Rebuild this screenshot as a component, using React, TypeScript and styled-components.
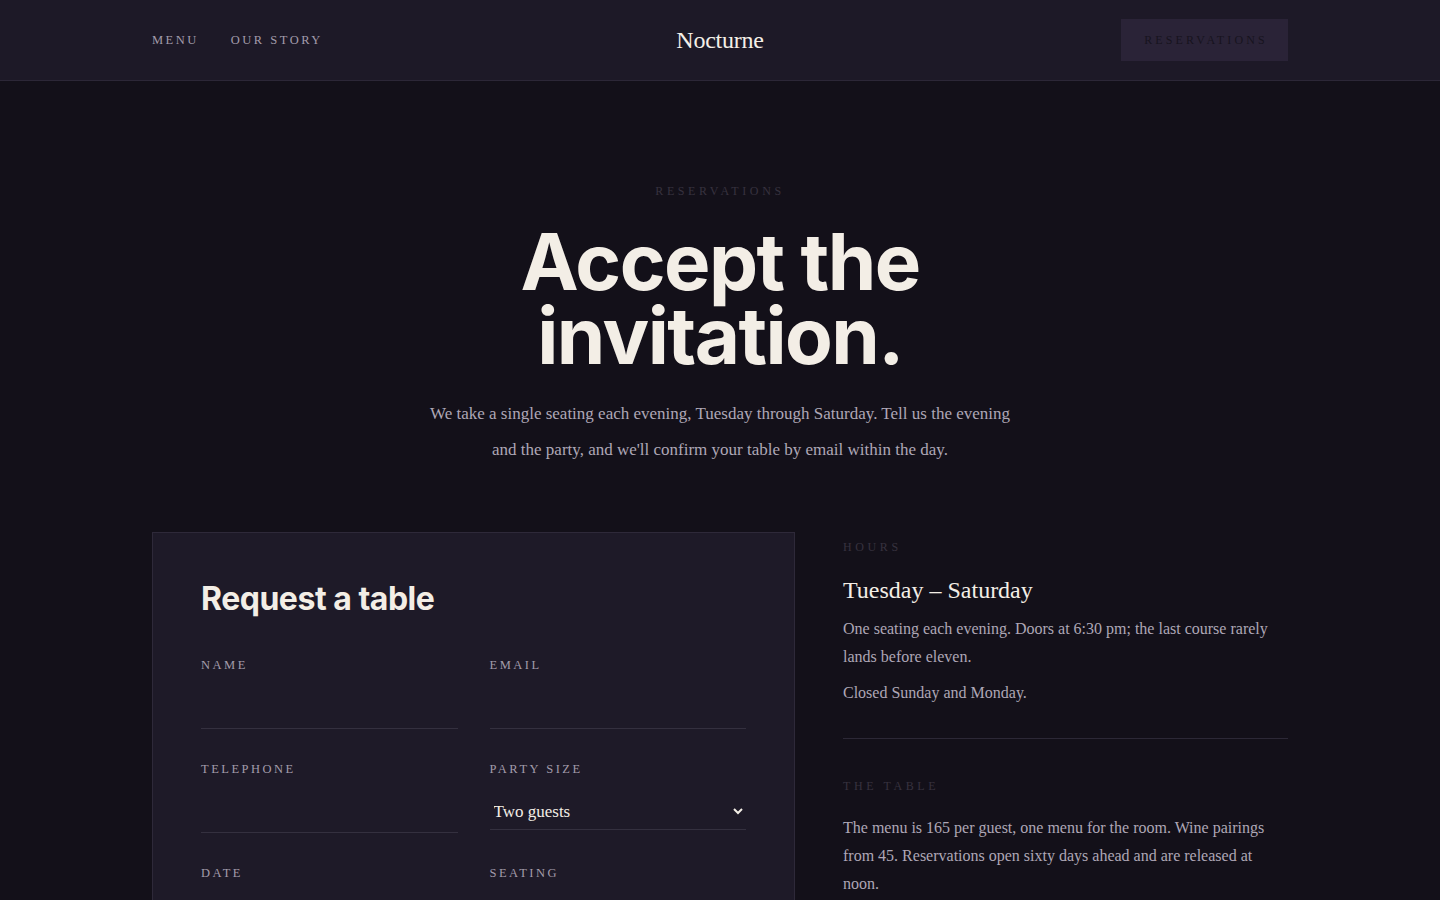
import React from 'react';
import styled, { createGlobalStyle } from 'styled-components';

const GlobalStyle = createGlobalStyle`
  html, body {
    margin: 0;
    padding: 0;
    background: #131019;
  }
  body {
    font-family: "Liberation Serif", "DejaVu Serif", serif;
    color: #b7b0bf;
  }
  * { box-sizing: border-box; }
`;

const serif = `"Liberation Serif", "DejaVu Serif", serif`;
const sans = `Inter, "Noto Sans", "Liberation Sans", sans-serif`;

const Page = styled.div`
  min-height: 100vh;
  background: #131019;
`;

const Header = styled.header`
  height: 81px;
  background: #1d1927;
  border-bottom: 1px solid #2c2737;
`;

const HeaderInner = styled.div`
  width: 1136px;
  margin: 0 auto;
  height: 100%;
  display: grid;
  grid-template-columns: 1fr auto 1fr;
  align-items: center;
`;

const Nav = styled.nav`
  display: flex;
  gap: 32px;
`;

const NavLink = styled.a`
  font-family: ${serif};
  font-size: 12.5px;
  letter-spacing: 0.2em;
  text-transform: uppercase;
  color: #a39cab;
  text-decoration: none;
`;

const Logo = styled.div`
  font-family: ${serif};
  font-size: 24px;
  color: #f4efe7;
  letter-spacing: -0.01em;
`;

const HeaderButton = styled.button`
  justify-self: end;
  width: 167px;
  height: 42px;
  background: #2a2337;
  border: none;
  font-family: ${serif};
  font-size: 12px;
  letter-spacing: 0.26em;
  text-transform: uppercase;
  color: #17131e;
  padding: 0 0 0 3px;
`;

const Hero = styled.section`
  padding-top: 103px;
  text-align: center;
`;

const Eyebrow = styled.div<{ $align?: string }>`
  font-family: ${serif};
  font-size: 12px;
  letter-spacing: 0.3em;
  text-transform: uppercase;
  color: #37323f;
  text-align: ${(p) => p.$align || 'center'};
`;

const Title = styled.h1`
  font-family: ${sans};
  font-weight: 700;
  font-size: 78px;
  line-height: 74px;
  letter-spacing: -0.02em;
  color: #f3eee6;
  margin: 26px auto 0;
`;

const Lead = styled.p`
  font-family: ${serif};
  font-size: 17px;
  line-height: 36px;
  color: #aea7b6;
  width: 600px;
  margin: 23px auto 0;
`;

const Main = styled.div`
  width: 1136px;
  margin: 64px auto 0;
  display: grid;
  grid-template-columns: 643px 1fr;
  column-gap: 48px;
  align-items: start;
`;

const Card = styled.div`
  background: #1e1a28;
  border: 1px solid #2e2939;
  padding: 46px 48px 60px;
`;

const CardTitle = styled.h2`
  font-family: ${sans};
  font-weight: 700;
  font-size: 32px;
  letter-spacing: -0.015em;
  color: #f3eee6;
  margin: 0 0 39px;
`;

const FieldGrid = styled.div`
  display: grid;
  grid-template-columns: 1fr 1fr;
  column-gap: 32px;
  row-gap: 32px;
  align-items: start;
`;

const Field = styled.label`
  display: flex;
  flex-direction: column;
`;

const Label = styled.span`
  font-family: ${serif};
  font-size: 12.5px;
  letter-spacing: 0.2em;
  text-transform: uppercase;
  color: #a39cab;
  line-height: 16px;
`;

const Input = styled.input`
  margin-top: 16px;
  height: 40px;
  background: transparent;
  border: none;
  border-bottom: 1px solid #34303f;
  outline: none;
  font-family: ${serif};
  font-size: 17px;
  color: #f3eee6;
  padding: 0;
`;

const Select = styled.select`
  margin-top: 16px;
  height: 37px;
  background: transparent;
  border: none;
  border-bottom: 1px solid #34303f;
  outline: none;
  font-family: ${serif};
  font-size: 17px;
  color: #f3eee6;
  color-scheme: dark;
  padding: 0;
  width: 100%;
`;

const Aside = styled.aside`
  display: flex;
  flex-direction: column;
  padding-top: 8px;
`;

const InfoBlock = styled.div<{ $divider?: boolean }>`
  padding-bottom: ${(p) => (p.$divider ? '31px' : '0')};
  margin-bottom: ${(p) => (p.$divider ? '40px' : '0')};
  border-bottom: ${(p) => (p.$divider ? '1px solid #2c2836' : 'none')};
`;

const InfoHeading = styled.h3`
  font-family: ${serif};
  font-weight: 400;
  font-size: 24px;
  color: #f3eee6;
  margin: 22px 0 11px;
`;

const InfoText = styled.p<{ $gapTop?: number }>`
  font-family: ${serif};
  font-size: 16px;
  line-height: 28px;
  color: #aea7b6;
  margin: ${(p) => p.$gapTop ?? 0}px 0 0;
`;

export default function App() {
  return (
    <Page>
      <GlobalStyle />
      <Header>
        <HeaderInner>
          <Nav>
            <NavLink href="#">Menu</NavLink>
            <NavLink href="#">Our Story</NavLink>
          </Nav>
          <Logo>Nocturne</Logo>
          <HeaderButton>Reservations</HeaderButton>
        </HeaderInner>
      </Header>

      <Hero>
        <Eyebrow>Reservations</Eyebrow>
        <Title>
          Accept the
          <br />
          invitation.
        </Title>
        <Lead>
          We take a single seating each evening, Tuesday through Saturday. Tell us the evening and
          the party, and we'll confirm your table by email within the day.
        </Lead>
      </Hero>

      <Main>
        <Card>
          <CardTitle>Request a table</CardTitle>
          <FieldGrid>
            <Field>
              <Label>Name</Label>
              <Input type="text" />
            </Field>
            <Field>
              <Label>Email</Label>
              <Input type="email" />
            </Field>
            <Field>
              <Label>Telephone</Label>
              <Input type="tel" />
            </Field>
            <Field>
              <Label>Party size</Label>
              <Select defaultValue="2">
                <option value="1">One guest</option>
                <option value="2">Two guests</option>
                <option value="3">Three guests</option>
                <option value="4">Four guests</option>
              </Select>
            </Field>
            <Field>
              <Label>Date</Label>
              <Input type="text" />
            </Field>
            <Field>
              <Label>Seating</Label>
              <Input type="text" />
            </Field>
          </FieldGrid>
        </Card>

        <Aside>
          <InfoBlock $divider>
            <Eyebrow $align="left">Hours</Eyebrow>
            <InfoHeading>Tuesday – Saturday</InfoHeading>
            <InfoText>
              One seating each evening. Doors at 6:30 pm; the last course rarely lands before eleven.
            </InfoText>
            <InfoText $gapTop={8}>Closed Sunday and Monday.</InfoText>
          </InfoBlock>
          <InfoBlock>
            <Eyebrow $align="left">The Table</Eyebrow>
            <InfoText $gapTop={20}>
              The menu is 165 per guest, one menu for the room. Wine pairings from 45. Reservations
              open sixty days ahead and are released at noon.
            </InfoText>
          </InfoBlock>
        </Aside>
      </Main>
    </Page>
  );
}
